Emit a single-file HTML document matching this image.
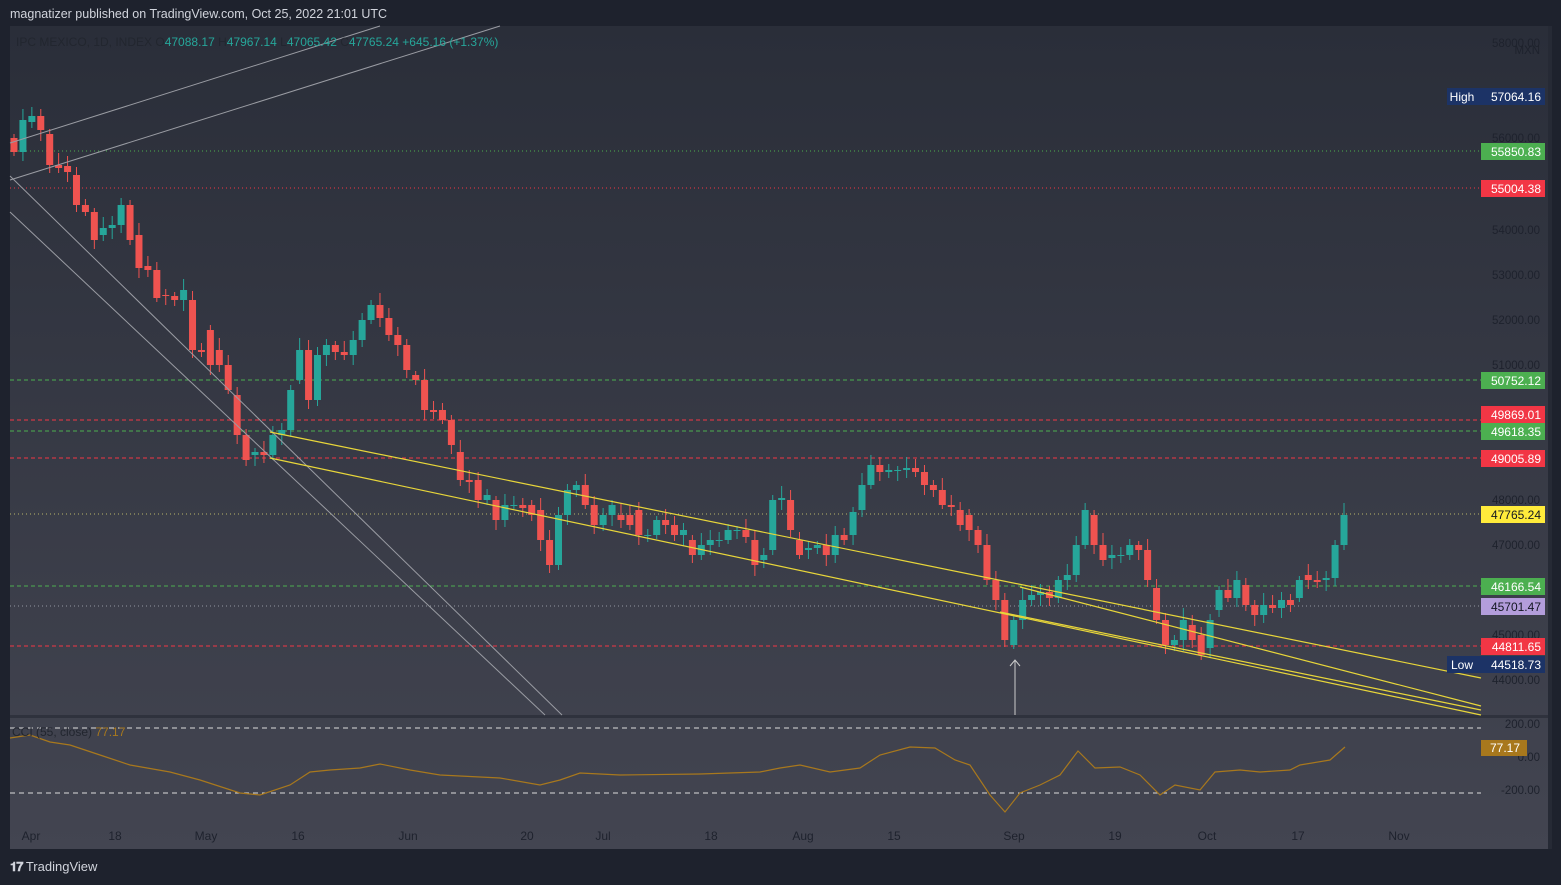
<!DOCTYPE html>
<html><head><meta charset="utf-8"><style>
body{margin:0;width:1561px;height:885px;background:#1e222d;overflow:hidden;font-family:"Liberation Sans",sans-serif;}
#hdr{position:absolute;left:10px;top:7px;color:#d1d4dc;font-size:12.5px;}
svg{position:absolute;left:0;top:0}
#logo{position:absolute;left:10px;top:859px;color:#d1d4dc;font-size:13px;}
</style></head><body>
<svg id="s" width="1561" height="885" xmlns="http://www.w3.org/2000/svg">
<defs><linearGradient id="g" x1="0" y1="0" x2="0" y2="1"><stop offset="0" stop-color="#2a2e39"/><stop offset="1" stop-color="#434551"/></linearGradient></defs>
<rect x="10" y="26" width="1538" height="823" fill="url(#g)"/>
<rect x="1548" y="26" width="4" height="823" fill="#262a35"/>
<rect x="10" y="715" width="1538" height="3" fill="#2f323d"/>
<g id="lv"></g><g id="cd"></g><g id="ov"></g>
</svg>
<div id="hdr">magnatizer published on TradingView.com, Oct 25, 2022 21:01 UTC</div>
<div id="logo"><b style="letter-spacing:-1px">𝟏𝟕</b> TradingView</div>
<script>
const NS="http://www.w3.org/2000/svg",S=document.getElementById('s');
function el(t,a,p,txt){const e=document.createElementNS(NS,t);for(const k in a)e.setAttribute(k,a[k]);if(txt!==undefined)e.textContent=txt;(p||S).appendChild(e);return e;}
const lv=document.getElementById('lv'),cd=document.getElementById('cd'),ov=document.getElementById('ov');
[[57,'MXN'],[50,'58000.00'],[145,'56000.00'],[237,'54000.00'],[282,'53000.00'],[327,'52000.00'],[372,'51000.00'],[507,'48000.00'],[552,'47000.00'],[642,'45000.00'],[687,'44000.00'],[731,'200.00'],[764,'0.00'],[797,'-200.00']].forEach(a=>el('text',{x:1540,y:a[0]-3,'text-anchor':'end','font-size':11.5,fill:'#1e222d'},lv,a[1]));
const L=[[151,'#4caf50','1 3','55850.83','#4caf50','#fff',151],[188,'#f23645','1 3','55004.38','#f23645','#fff',188],[380,'#4caf50','4 3','50752.12','#4caf50','#fff',380],[420,'#f23645','4 3','49869.01','#f23645','#fff',414],[431,'#4caf50','4 3','49618.35','#4caf50','#fff',431],[458,'#f23645','4 3','49005.89','#f23645','#fff',458],[514,'#b8b46a','1 3','47765.24','#ffeb3b','#131722',514],[586,'#4caf50','4 3','46166.54','#4caf50','#fff',586],[606,'#9598a1','1 3','45701.47','#b39ddb','#131722',606],[646,'#f23645','4 3','44811.65','#f23645','#fff',646]];
L.forEach(l=>{el('line',{x1:10,x2:1481,y1:l[0],y2:l[0],stroke:l[1],'stroke-dasharray':l[2],'stroke-width':1},lv);});
el('line',{x1:10,x2:1481,y1:728,y2:728,stroke:'#ddd','stroke-dasharray':'5 4'},lv);
el('line',{x1:10,x2:1481,y1:793,y2:793,stroke:'#ddd','stroke-dasharray':'5 4'},lv);
const C=[[138,152],[152,120],[122,116],[116,130],[134,165],[165,168],[166,172],[175,205],[205,212],[212,240],[235,228],[228,225],[225,205],[205,240],[235,268],[266,270],[270,298],[295,296],[296,300],[300,290],[300,350],[350,352],[330,365],[350,365],[365,390],[395,435],[435,460],[455,452],[452,455],[455,435],[435,430],[430,390],[380,350],[350,400],[400,355],[355,345],[345,352],[352,355],[355,340],[340,320],[320,305],[305,318],[318,335],[335,345],[345,370],[375,380],[380,410],[410,412],[410,420],[420,445],[452,480],[480,482],[480,500],[500,495],[500,520],[520,505],[505,505],[505,508],[505,515],[510,540],[540,565],[565,515],[515,490],[490,485],[485,505],[505,525],[525,515],[515,505],[515,520],[515,525],[510,535],[535,535],[535,520],[520,525],[525,535],[535,530],[540,555],[555,545],[545,540],[540,540],[540,530],[530,530],[530,537],[540,565],[560,555],[550,500],[500,498],[500,530],[540,555],[550,548],[548,545],[545,555],[555,535],[535,540],[535,512],[510,485],[485,465],[465,472],[472,470],[470,470],[470,468],[468,472],[472,485],[485,490],[490,505],[505,507],[510,525],[515,530],[530,545],[545,580],[580,600],[600,640],[645,620],[620,600],[600,595],[595,592],[592,598],[598,580],[580,575],[575,545],[545,510],[515,545],[545,560],[558,555],[555,555],[555,545],[545,550],[550,580],[588,620],[620,645],[645,640],[640,620],[625,640],[635,655],[648,620],[610,590],[590,598],[598,580],[585,605],[605,615],[615,605],[605,608],[608,600],[600,605],[598,580],[575,580],[580,582],[580,578],[578,545],[545,515]];
const SP=(1344-14)/(C.length-1);
C.forEach((c,i)=>{const x=14+i*SP;let o=c[0],cl=c[1];const up=cl<=o;const col=up?'#26a69a':'#ef5350';const t=Math.min(o,cl),b=Math.max(o,cl);const hi=t-4-(i*7%9),lo=b+4+(i*5%8);
el('line',{x1:x,x2:x,y1:hi,y2:lo,stroke:col},cd);el('rect',{x:x-3.5,y:t,width:7,height:Math.max(1,b-t),fill:col},cd);});
[[10,176,562,715],[10,212,545,715],[10,143,380,26],[10,180,500,26]].forEach(a=>el('line',{x1:a[0],y1:a[1],x2:a[2],y2:a[3],stroke:'#9a9ca3','stroke-width':1},ov));
[[270,432,1481,678],[270,458,1481,715],[1020,587,1481,706],[1000,612,1481,710]].forEach(a=>el('line',{x1:a[0],y1:a[1],x2:a[2],y2:a[3],stroke:'#e8d63a','stroke-width':1.2},ov));
el('line',{x1:1015,y1:660,x2:1015,y2:715,stroke:'#ccc'},ov);el('path',{d:'M1010 666L1015 660L1020 666',stroke:'#ccc',fill:'none'},ov);
el('polyline',{points:'10,738 30,735 50,742 70,745 100,755 130,765 170,772 200,780 240,793 260,795 290,785 310,772 330,770 360,768 380,764 410,770 440,775 500,778 540,785 560,780 580,773 620,775 700,774 760,772 780,768 800,765 830,772 860,768 880,755 910,747 935,748 955,760 970,765 990,795 1005,812 1020,793 1040,785 1060,775 1078,751 1095,768 1120,767 1140,775 1160,795 1175,785 1200,790 1215,772 1240,770 1260,772 1290,770 1300,765 1330,760 1345,747',fill:'none',stroke:'#a8781d','stroke-width':1.2},ov);
L.forEach(l=>{el('rect',{x:1481,y:l[6]-8,width:64,height:17,fill:l[4]},ov);el('text',{x:1541,y:l[6]+5,'text-anchor':'end','font-size':12,fill:l[5]},ov,l[3]);});
[[96,'High','57064.16'],[664,'Low','44518.73']].forEach(a=>{el('rect',{x:1447,y:a[0]-8,width:98,height:17,fill:'#1c3366'},ov);el('text',{x:1462,y:a[0]+5,'text-anchor':'middle','font-size':12,fill:'#fff'},ov,a[1]);el('text',{x:1541,y:a[0]+5,'text-anchor':'end','font-size':12,fill:'#fff'},ov,a[2]);});
el('rect',{x:1481,y:740,width:46,height:16,fill:'#a8781d'},ov);el('text',{x:1520,y:752,'text-anchor':'end','font-size':12,fill:'#fff'},ov,'77.17');
const h=el('text',{x:16,y:46,'font-size':12,fill:'#22262f'},ov);h.innerHTML='IPC MEXICO, 1D, INDEX  O<tspan fill="#26a69a">47088.17</tspan>  H<tspan fill="#26a69a">47967.14</tspan>  L<tspan fill="#26a69a">47065.42</tspan>  C<tspan fill="#26a69a">47765.24  +645.16 (+1.37%)</tspan>';
h.setAttribute('xml:space','preserve');
const ci=el('text',{x:12,y:736,'font-size':12,fill:'#22262f'},ov);ci.innerHTML='CCI (55, close)  <tspan fill="#a8781d">77.17</tspan>';
[[31,'Apr'],[115,'18'],[206,'May'],[298,'16'],[408,'Jun'],[527,'20'],[603,'Jul'],[711,'18'],[803,'Aug'],[894,'15'],[1014,'Sep'],[1115,'19'],[1207,'Oct'],[1298,'17'],[1399,'Nov']].forEach(a=>el('text',{x:a[0],y:840,'text-anchor':'middle','font-size':12,fill:'#1e222d'},ov,a[1]));
</script>
</body></html>
